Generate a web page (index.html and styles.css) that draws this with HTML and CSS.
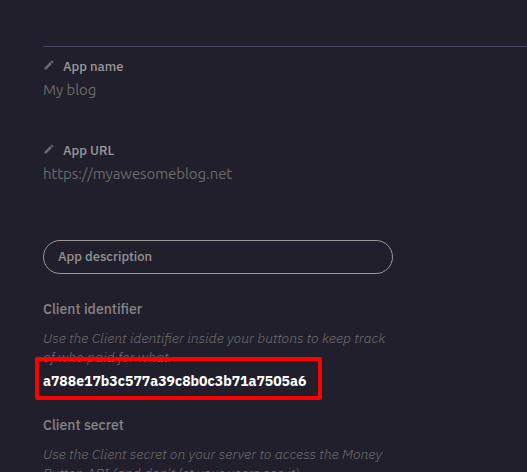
FILE: index.html
```html
<!DOCTYPE html>
<html lang="en">
<head>
<meta charset="utf-8">
<title>App settings</title>
<link rel="stylesheet" href="styles.css">
</head>
<body>
<main class="settings">
  <section class="field">
    <div class="label"><svg class="pencil" viewBox="0 0 24 24"><path d="M3 17.25V21h3.75L17.81 9.94l-3.75-3.75L3 17.25zM20.71 7.04a1 1 0 0 0 0-1.41l-2.34-2.34a1 1 0 0 0-1.41 0l-1.83 1.83 3.75 3.75 1.83-1.83z"/></svg><span>App name</span></div>
    <div class="value">My blog</div>
  </section>
  <section class="field">
    <div class="label"><svg class="pencil" viewBox="0 0 24 24"><path d="M3 17.25V21h3.75L17.81 9.94l-3.75-3.75L3 17.25zM20.71 7.04a1 1 0 0 0 0-1.41l-2.34-2.34a1 1 0 0 0-1.41 0l-1.83 1.83 3.75 3.75 1.83-1.83z"/></svg><span>App URL</span></div>
    <div class="value">https://myawesomeblog.net</div>
  </section>
  <div class="description">App description</div>
  <section class="credential">
    <h2>Client identifier</h2>
    <p class="help">Use the Client identifier inside your buttons to keep track<br>of who paid for what.</p>
    <div class="identifier">a788e17b3c577a39c8b0c3b71a7505a6<div class="highlight"></div></div>
  </section>
  <section class="credential">
    <h2>Client secret</h2>
    <p class="help">Use the Client secret on your server to access the Money<br>Button API (and don't let your users see it).</p>
  </section>
</main>
</body>
</html>
```
FILE: styles.css
```css
* { box-sizing: border-box; }
html { overflow: hidden; background: #211f2b; }
body {
  margin: 0;
  height: 472px;
  overflow: hidden;
  color: #8e8c8d;
  font-family: "IBM Plex Sans", Roboto, "Liberation Sans", sans-serif;
}
.settings { margin: 46px 0 0 43px; border-top: 1px solid #48435f; white-space: nowrap; }
.field { height: 84px; padding-top: 10px; }
.label { display: flex; height: 20px; line-height: 20px; font-size: 13px; font-weight: 500; color: #9b9999; }
.pencil { width: 12px; height: 12px; margin: 2px 8px 0 0; fill: #6c6a6c; }
.value { height: 26px; line-height: 26px; font-family: Ubuntu, "Noto Sans", sans-serif; font-size: 15px; letter-spacing: -.08px; color: #6c6a6c; }
.description { width: 350px; height: 34px; margin-top: 25px; padding-left: 14px; border: 1px solid #999797; border-radius: 17px; line-height: 32px; font-size: 13px; font-weight: 500; color: #949293; }
.credential { padding-top: 24px; height: 116px; }
h2 { margin: 0; height: 22px; line-height: 22px; font-size: 14px; font-weight: 500; color: #858384; }
.help { margin: 9px 0 0; font-size: 14px; line-height: 19px; font-style: italic; font-weight: 300; color: #706e70; }
.identifier { position: relative; height: 24px; margin-top: 2px; line-height: 24px; font-size: 14px; font-weight: 700; color: #fff; }
.highlight { position: absolute; left: -8px; top: -12px; width: 287px; height: 43px; border: 4px solid #f00; border-radius: 2px; }
```
